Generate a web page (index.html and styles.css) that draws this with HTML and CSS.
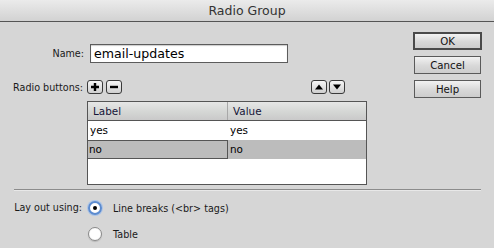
FILE: index.html
```html
<!DOCTYPE html>
<html>

<head>
    <meta charset="UTF-8">
    <title>Radio Group</title>
    <link rel="stylesheet" href="styles.css">
</head>

<body>
    <header class="titlebar">Radio Group</header>
    <div class="dialog">
        <div class="main">
            <div class="row name-row">
                <label class="lbl">Name:</label>
                <div class="field">email-updates</div>
            </div>
            <div class="row tools-row">
                <span class="lbl">Radio buttons:</span>
                <div class="tools">
                    <button class="tool">
                        <svg width="10" height="10" viewBox="0 0 10 10"><path d="M5 1v8M1 5h8" stroke="#000" stroke-width="2.4"/></svg>
                    </button>
                    <button class="tool">
                        <svg width="10" height="10" viewBox="0 0 10 10"><path d="M1 5h8" stroke="#000" stroke-width="2.4"/></svg>
                    </button>
                </div>
                <div class="tools move">
                    <button class="tool">
                        <svg width="10" height="8" viewBox="0 0 10 8"><path d="M1 6.5h8L5 1.5z" fill="#000"/></svg>
                    </button>
                    <button class="tool">
                        <svg width="10" height="8" viewBox="0 0 10 8"><path d="M1 1.5h8L5 6.5z" fill="#000"/></svg>
                    </button>
                </div>
            </div>
            <div class="grid">
                <div class="grid-head">
                    <div class="cell first">Label</div>
                    <div class="cell">Value</div>
                </div>
                <div class="grid-row">
                    <div class="cell first">yes</div>
                    <div class="cell">yes</div>
                </div>
                <div class="grid-row selected">
                    <div class="cell first focus">no</div>
                    <div class="cell">no</div>
                </div>
            </div>
        </div>
        <div class="actions">
            <button class="btn default">OK</button>
            <button class="btn">Cancel</button>
            <button class="btn">Help</button>
        </div>
    </div>
    <div class="separator"></div>
    <div class="layout">
        <span class="lbl">Lay out using:</span>
        <div class="options">
            <div class="option"><span class="radio checked"></span>Line breaks (&lt;br&gt; tags)</div>
            <div class="option"><span class="radio"></span>Table</div>
        </div>
    </div>
</body>
</html>
```

FILE: styles.css
```css
* {
    margin: 0;
    padding: 0;
    box-sizing: border-box;
}

body {
    width: 494px;
    height: 248px;
    overflow: hidden;
    background: #d6d6d6;
    font-family: "DejaVu Sans", sans-serif;
    color: #1a1a1a;
}

.titlebar {
    height: 22px;
    border-bottom: 1px solid #555;
    background: linear-gradient(#ebebeb, #d2d2d2);
    text-align: center;
    font-size: 12.5px;
    line-height: 22px;
    color: #333;
}

.dialog {
    display: flex;
}

.main {
    width: 367px;
    padding-top: 22px;
}

.row {
    display: flex;
    align-items: center;
}

.lbl {
    font-size: 9.6px;
    text-align: right;
}

.name-row .lbl {
    width: 84px;
    margin-right: 6px;
}

.field {
    width: 198px;
    height: 19px;
    border: 1px solid #5c5c5c;
    background: #fff;
    box-shadow: inset 0 1px 1px rgba(0,0,0,0.2);
    font-size: 12.6px;
    line-height: 17px;
    padding-left: 3px;
    color: #000;
}

.tools-row {
    margin-top: 17px;
    height: 14px;
}

.tools-row .lbl {
    width: 83px;
    margin-right: 4px;
}

.tools {
    display: flex;
    gap: 3px;
}

.tools.move {
    margin-left: auto;
    margin-right: 22px;
    gap: 2px;
}

.tool {
    width: 16px;
    height: 14px;
    border: 1px solid #3a3a3a;
    border-radius: 3px;
    background: linear-gradient(#f6f6f6, #cfcfcf);
    display: flex;
    align-items: center;
    justify-content: center;
}

.grid {
    margin: 7px 0 0 87px;
    width: 280px;
    height: 84px;
    border: 1px solid #555;
    background: #fff;
    font-size: 10.4px;
    color: #000;
}

.grid-head,
.grid-row {
    display: flex;
    height: 19px;
}

.grid-head {
    border-bottom: 1px solid #555;
    background: linear-gradient(#e6e6e6, #d6d8d6 50%, #c9c9c9);
    height: 19px;
    color: #141438;
}

.cell {
    flex: 1;
    line-height: 18px;
    padding-left: 2px;
}

.cell.first {
    flex: 0 0 140px;
}

.grid-head .cell {
    padding-left: 5px;
}

.grid-head .cell.first {
    border-right: 1px solid #a8a8a8;
}

.grid-row.selected {
    background: #bcbcbc;
}

.cell.focus {
    border: 1px solid #555;
    padding-left: 1px;
    line-height: 16px;
    flex-basis: 141px;
    margin-left: -1px;
}

.actions {
    display: flex;
    flex-direction: column;
    gap: 6px;
    margin: 10px 0 0 46px;
}

.btn {
    width: 69px;
    height: 18px;
    border: 1px solid #5a5a5a;
    background: linear-gradient(#f2f2f2, #d8d8d8 55%, #cdcdcd);
    font-family: "DejaVu Sans", sans-serif;
    font-size: 10.2px;
    color: #111;
}

.btn.default {
    border: 2px solid #4a4a4a;
}

.btn + .btn {
    margin-left: 1px;
    width: 67px;
}

.separator {
    margin: 4px 13px 0 14px;
    height: 2px;
    border-top: 1px solid #8c8c8c;
    border-bottom: 1px solid #e8e8e8;
}

.layout {
    display: flex;
    padding-top: 10px;
}

.layout .lbl {
    width: 82px;
    margin-right: 6px;
    line-height: 14px;
}

.options {
    display: flex;
    flex-direction: column;
    gap: 12px;
    font-size: 9.6px;
}

.option {
    display: flex;
    align-items: center;
    gap: 11px;
    height: 14px;
}

.radio {
    width: 14px;
    height: 14px;
    border-radius: 50%;
    border: 1px solid #8a8a8a;
    background: radial-gradient(#fff 55%, #e4e4e4);
    box-shadow: 0 1px 1px rgba(0,0,0,0.15);
    position: relative;
}

.radio.checked {
    border: 2px solid #5b8bd0;
    box-shadow: 0 0 0 1px #a9c4ea;
}

.radio.checked::after {
    content: "";
    position: absolute;
    left: 3px;
    top: 3px;
    width: 4px;
    height: 4px;
    border-radius: 50%;
    background: #000;
}
```
